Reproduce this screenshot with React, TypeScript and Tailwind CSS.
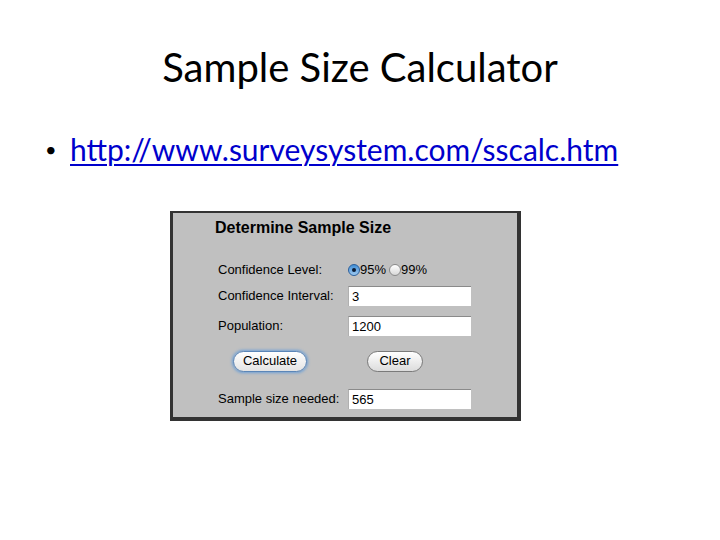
import React from "react";

export default function App() {
  const label = "text-[13px] text-black";
  const inputCls =
    "w-[123px] h-[20px] bg-white border-t border-t-[#8a8a8a] border-l border-l-[#b0b0b0] px-[3px] text-[13px] text-black leading-[19px] flex items-center";
  return (
    <div className="w-[720px] h-[540px] bg-white relative overflow-hidden">
      <div
        className="pt-[43px] text-center text-[40px] leading-[48px] text-black"
        style={{ fontFamily: "Lato, 'Open Sans', sans-serif" }}
      >
        Sample Size Calculator
      </div>
      <div
        className="flex items-center mt-[41px] pl-[45px] text-[30px] leading-[34px]"
        style={{ fontFamily: "Lato, 'Open Sans', sans-serif" }}
      >
        <span className="w-[25px] text-[20px] text-black">•</span>
        <span className="text-[#0000cc] underline decoration-[2px] underline-offset-[3px]">
          http://www.surveysystem.com/sscalc.htm
        </span>
      </div>
      <div className="ml-[170px] mt-[45px] w-[351px] h-[210px] border-t-[2px] border-l-[3px] border-r-[4px] border-b-[4px] border-[#333333] bg-[#c0c0c0]"
        style={{ fontFamily: "'Liberation Sans', Arial, sans-serif" }}
      >
        <div className="pl-[42px] pt-[6px] text-[16px] font-bold leading-[18px] text-black">
          Determine Sample Size
        </div>
        <div className="pl-[45px] pt-[23px] flex flex-col">
          <div className="flex items-center h-[20px]">
            <div className={`${label} w-[130px]`}>Confidence Level:</div>
            <div className="flex items-center text-[13px] text-black">
              <span className="w-[12px] h-[12px] rounded-full bg-gradient-to-b from-[#3f8fd6] to-[#9cc8ef] border border-[#2b5f9c] flex items-center justify-center">
                <span className="w-[4px] h-[4px] rounded-full bg-[#0a1a33]" />
              </span>
              <span>95%</span>
              <span className="ml-[3px] w-[12px] h-[12px] rounded-full bg-gradient-to-b from-[#ffffff] to-[#d8d8d8] border border-[#8a8a8a]" />
              <span>99%</span>
            </div>
          </div>
          <div className="flex items-center h-[20px] mt-[6px]">
            <div className={`${label} w-[130px]`}>Confidence Interval:</div>
            <div className={inputCls}>3</div>
          </div>
          <div className="flex items-center h-[20px] mt-[10px]">
            <div className={`${label} w-[130px]`}>Population:</div>
            <div className={inputCls}>1200</div>
          </div>
          <div className="flex items-center h-[22px] mt-[14px]">
            <div className="ml-[15px] w-[74px] h-[21px] rounded-full border border-[#5b86b8] shadow-[0_0_3px_1px_#6ea0d6] bg-gradient-to-b from-white to-[#e4e4e4] flex items-center justify-center text-[13px] text-black">
              Calculate
            </div>
            <div className="ml-[60px] w-[56px] h-[21px] rounded-full border border-[#7a7a7a] bg-gradient-to-b from-white to-[#dcdcdc] flex items-center justify-center text-[13px] text-black">
              Clear
            </div>
          </div>
          <div className="flex items-center h-[20px] mt-[17px]">
            <div className={`${label} w-[130px]`}>Sample size needed:</div>
            <div className={inputCls}>565</div>
          </div>
        </div>
      </div>
    </div>
  );
}
